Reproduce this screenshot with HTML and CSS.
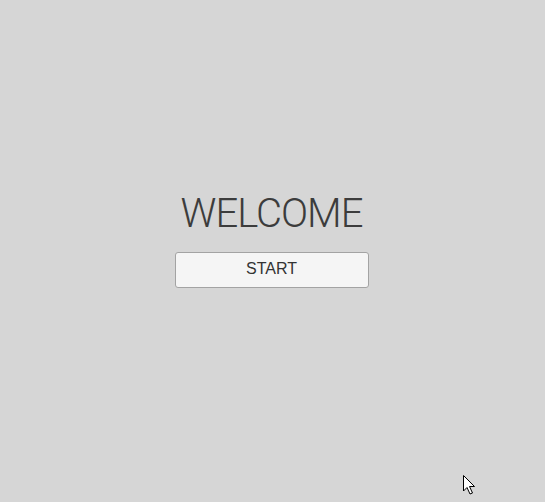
FILE: index.html
```html
<!DOCTYPE html>
<html>
<head>
<meta charset="utf-8">
<link rel="stylesheet" href="styles.css">
</head>
<body>
<main class="screen">
  <h1 class="title">WELCOME</h1>
  <button class="start">START</button>
</main>
<svg class="cursor" width="14" height="22" viewBox="0 0 14 22">
  <path d="M1.5 1.5 L1.5 17 L5 13.5 L8 20 L10.5 19 L7.5 12.5 L12.5 12.5 Z" fill="#fff" stroke="#000" stroke-width="1" stroke-linejoin="miter"/>
</svg>
</body>
</html>
```
FILE: styles.css
```css
html, body {
  margin: 0;
  padding: 0;
}
body {
  background: #d6d6d6;
  width: 545px;
  height: 502px;
  overflow: hidden;
  position: relative;
}
.screen {
  display: flex;
  flex-direction: column;
  align-items: center;
  padding-top: 190px;
  padding-right: 2px;
  gap: 14px;
  box-sizing: border-box;
  height: 502px;
}
.title {
  margin: 0;
  font-family: Roboto, "Liberation Sans", sans-serif;
  font-weight: 300;
  font-size: 40px;
  line-height: 48px;
  letter-spacing: -1px;
  color: #3c3c3c;
}
.start {
  width: 194px;
  height: 36px;
  margin: 0;
  padding: 0 0 3px 0;
  background: #f5f5f5;
  border: 1px solid #a3a3a3;
  border-radius: 3px;
  font-family: "Liberation Sans", Arial, sans-serif;
  font-size: 16px;
  color: #333;
}
.cursor {
  position: absolute;
  left: 462px;
  top: 474px;
}
```
